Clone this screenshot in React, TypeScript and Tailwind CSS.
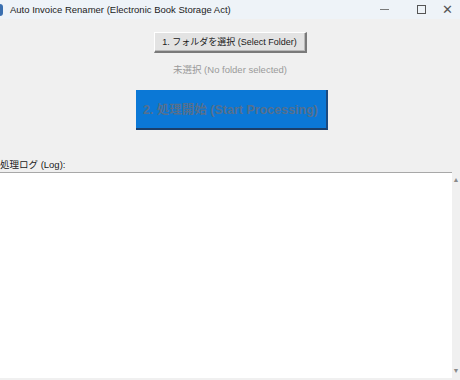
const font = {
  fontFamily: '"Liberation Sans", "Noto Sans CJK JP", sans-serif',
};

export default function App() {
  return (
    <div
      className="flex h-[380px] w-[460px] flex-col overflow-hidden bg-[#f0f0f0] text-[#1a1a1a]"
      style={font}
    >
      {/* title bar */}
      <div className="flex h-[19px] items-center bg-[#eef3f8]">
        <div className="h-[12px] w-[3px] rounded-r-sm bg-[#3a6fb0]" />
        <span className="ml-[7px] whitespace-nowrap text-[9.5px] leading-none text-[#1c1c1c]">
          Auto Invoice Renamer (Electronic Book Storage Act)
        </span>
        <div className="ml-auto flex items-center">
          <div className="flex w-[37px] justify-center">
            <div className="h-px w-[9px] bg-[#7a7a7a]" />
          </div>
          <div className="flex w-[37px] justify-center">
            <div className="h-[9px] w-[9px] border border-[#555]" />
          </div>
          <div className="flex w-[20px] justify-start pl-[2px] text-[13px] leading-none text-[#555]">
            ✕
          </div>
        </div>
      </div>

      {/* controls */}
      <div className="flex flex-col items-center">
        <button className="mt-[13px] flex h-[21px] w-[153px] items-center justify-center whitespace-nowrap border-t border-l border-white border-r-2 border-b-2 border-r-[#7a7a7a] border-b-[#7a7a7a] bg-[#e3e3e3] text-[9px] leading-none text-[#1a1a1a] shadow-[inset_-1px_-1px_0_#b9b9b9]">
          1. フォルダを選択 (Select Folder)
        </button>
        <div className="mt-[12px] whitespace-nowrap text-[9.5px] leading-none text-[#9a9a9a]">
          未選択 (No folder selected)
        </div>
        <button className="mt-[15px] ml-[3px] flex h-[40px] w-[192px] items-center justify-center whitespace-nowrap border-b-2 border-r-2 border-b-[#1b3f6a] border-r-[#1b4a80] bg-[#0b78d6] pt-[3px] text-[12.5px] font-bold leading-none text-[#55708e]">
          2. 処理開始 (Start Processing)
        </button>
      </div>

      {/* log */}
      <div className="mt-[30px] whitespace-nowrap text-[9.5px] leading-none text-[#1a1a1a]">
        処理ログ (Log):
      </div>
      <div className="mt-[3px] flex h-[206px]">
        <div className="w-[452px] border-t border-[#a8a8a8] bg-white" />
        <div className="flex w-[8px] flex-col items-center justify-between py-[4px] text-[7px] leading-none text-[#8a8a8a]">
          <span>▲</span>
          <span>▼</span>
        </div>
      </div>
    </div>
  );
}
